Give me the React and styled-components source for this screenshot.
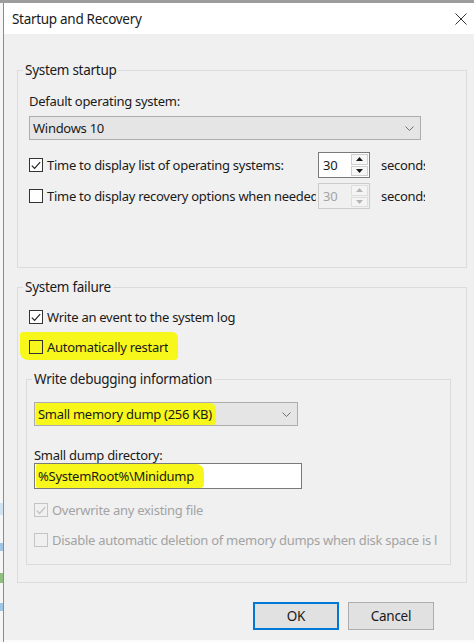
import React from "react";
import styled, { createGlobalStyle } from "styled-components";

const GlobalStyle = createGlobalStyle`
  html, body {
    margin: 0;
    padding: 0;
  }
  body {
    background: #f0f0f0;
    font-family: "Noto Sans", "Open Sans", sans-serif;
    color: #1a1a1a;
  }
`;

const Screen = styled.div`
  display: flex;
  width: 474px;
  height: 642px;
  box-sizing: border-box;
  overflow: hidden;
  border-top: 3px solid #9d9d9d;
`;

const BehindWindow = styled.div`
  width: 3px;
  flex-shrink: 0;
  background: linear-gradient(
    to bottom,
    #f6f6f6 0,
    #f6f6f6 500px,
    #cfe3f2 500px,
    #cfe3f2 512px,
    #f6f6f6 512px,
    #f6f6f6 540px,
    #9fc6e6 540px,
    #9fc6e6 548px,
    #f6f6f6 548px,
    #f6f6f6 570px,
    #8fbf7f 570px,
    #8fbf7f 580px,
    #f6f6f6 580px,
    #f6f6f6 600px,
    #9fc6e6 600px,
    #9fc6e6 608px,
    #f6f6f6 608px
  );
`;

const Dialog = styled.div`
  flex: 1;
  display: flex;
  flex-direction: column;
  border-left: 1px solid #8c8c8c;
  background: #f0f0f0;
  font-size: 13px;
  letter-spacing: -0.28px;
`;

const TitleBar = styled.div`
  height: 31px;
  flex-shrink: 0;
  display: flex;
  align-items: center;
  justify-content: space-between;
  padding: 0 6px 0 8px;
  background: #ffffff;
  font-size: 13.5px;
  letter-spacing: -0.3px;
  color: #1a1a1a;
`;

const CloseButton = styled.span`
  display: flex;
  align-items: center;
  justify-content: center;
  width: 14px;
  height: 14px;
`;

const Body = styled.div`
  flex: 1;
  display: flex;
  flex-direction: column;
  padding: 27px 7px 0 13px;
  border-bottom: 2px solid #fbfbfb;
`;

const GroupBox = styled.fieldset`
  margin: ${(p) => p.$margin || "0"};
  padding: 0 ${(p) => p.$padRight}px ${(p) => p.$padBottom}px ${(p) => p.$padLeft}px;
  border: 1px solid #dcdcdc;
  min-width: 0;
  display: flex;
  flex-direction: column;
  align-items: flex-start;
  align-self: ${(p) => (p.$stretch ? "stretch" : "auto")};
`;

const GroupTitle = styled.legend`
  padding: 0 2px;
  margin-left: ${(p) => p.$shift}px;
  line-height: 18px;
  font-size: 13.5px;
`;

const Label = styled.div`
  margin-top: ${(p) => p.$top}px;
  line-height: ${(p) => p.$lh || 18}px;
  white-space: nowrap;
`;

const Select = styled.div`
  margin-top: ${(p) => p.$top}px;
  width: ${(p) => p.$width}px;
  height: 24px;
  box-sizing: border-box;
  display: flex;
  align-items: center;
  justify-content: space-between;
  padding: 0 6px 0 3px;
  background: #e5e5e5;
  border: 1px solid #adadad;
  white-space: nowrap;
`;

const TextField = styled.div`
  width: ${(p) => p.$width}px;
  height: 26px;
  box-sizing: border-box;
  display: flex;
  align-items: center;
  padding-left: 1px;
  background: #ffffff;
  border: 1px solid #7a7a7a;
`;

const Marker = styled.span`
  display: inline-flex;
  align-items: center;
  background: #f7f71c;
  border-radius: ${(p) => p.$radius || "3px 6px 4px 8px"};
  padding: ${(p) => p.$pad};
  margin: ${(p) => p.$margin};
`;

const SpinRow = styled.div`
  margin-top: ${(p) => p.$top}px;
  height: 26px;
  display: flex;
  align-items: center;
`;

const CheckRow = styled.div`
  margin-top: ${(p) => p.$top || 0}px;
  height: 18px;
  display: flex;
  align-items: center;
  width: ${(p) => (p.$width ? `${p.$width}px` : "auto")};
  overflow: hidden;
  white-space: nowrap;
  flex-shrink: 0;
  color: ${(p) => (p.$disabled ? "#a3a3a3" : "#1a1a1a")};
`;

const Box = styled.span`
  width: 14px;
  height: 14px;
  box-sizing: border-box;
  flex-shrink: 0;
  margin-right: 4px;
  display: flex;
  align-items: center;
  justify-content: center;
  border: 1px solid ${(p) => (p.$disabled ? "#c4c4c4" : "#333333")};
  background: ${(p) => (p.$clear ? "transparent" : p.$disabled ? "#f0f0f0" : "#ffffff")};
`;

const Spin = styled.div`
  margin-left: 2px;
  width: 52px;
  height: 26px;
  box-sizing: border-box;
  display: flex;
  flex-shrink: 0;
  border: 1px solid ${(p) => (p.$disabled ? "#cccccc" : "#7a7a7a")};
  background: ${(p) => (p.$disabled ? "#f0f0f0" : "#ffffff")};
  color: ${(p) => (p.$disabled ? "#a3a3a3" : "#1a1a1a")};
`;

const SpinValue = styled.span`
  flex: 1;
  padding: 3px 0 0 4px;
  line-height: 18px;
`;

const SpinButtons = styled.div`
  width: 17px;
  display: flex;
  flex-direction: column;
  gap: 1px;
  padding: 1px 1px 1px 0;
`;

const SpinButton = styled.span`
  flex: 1;
  display: flex;
  align-items: center;
  justify-content: center;
  background: ${(p) => (p.$disabled ? "#f4f4f4" : "#f7f7f7")};
  border: 1px solid ${(p) => (p.$disabled ? "#dedede" : "#cfcfcf")};
`;

const Seconds = styled.span`
  margin-left: 11px;
  width: 44px;
  overflow: hidden;
  white-space: nowrap;
`;

const ButtonRow = styled.div`
  margin-top: 19px;
  display: flex;
  justify-content: flex-end;
  gap: 9px;
  padding-right: 33px;
`;

const Button = styled.div`
  width: 86px;
  height: 28px;
  box-sizing: border-box;
  display: flex;
  align-items: center;
  justify-content: center;
  background: #e1e1e1;
  border: ${(p) => (p.$primary ? "2px solid #0078d7" : "1px solid #adadad")};
  font-size: 13.5px;
`;

const Check = ({ color = "#222" }) => (
  <svg width="10" height="9" viewBox="0 0 10 9">
    <path d="M0.8 4.6 L3.6 7.4 L9.2 1.2" fill="none" stroke={color} strokeWidth="1.2" />
  </svg>
);

const Chevron = () => (
  <svg width="9" height="5" viewBox="0 0 9 5">
    <path d="M0.5 0.5 L4.5 4.5 L8.5 0.5" fill="none" stroke="#707070" strokeWidth="1" />
  </svg>
);

const Arrow = ({ up, color }) => (
  <svg width="7" height="4" viewBox="0 0 7 4">
    <path d={up ? "M0 4 L3.5 0 L7 4 Z" : "M0 0 L3.5 4 L7 0 Z"} fill={color} />
  </svg>
);

const Close = () => (
  <svg width="12" height="12" viewBox="0 0 12 12">
    <path d="M0.5 0.5 L11.5 11.5 M11.5 0.5 L0.5 11.5" stroke="#333" strokeWidth="1" />
  </svg>
);

const CheckBox = ({ checked, disabled, clear, label, top, width }) => (
  <CheckRow $disabled={disabled} $top={top} $width={width}>
    <Box $disabled={disabled} $clear={clear}>
      {checked && <Check color={disabled ? "#bdbdbd" : "#222"} />}
    </Box>
    {label}
  </CheckRow>
);

const SpinBox = ({ value, disabled }) => {
  const arrow = disabled ? "#b5b5b5" : "#1a1a1a";
  return (
    <Spin $disabled={disabled}>
      <SpinValue>{value}</SpinValue>
      <SpinButtons>
        <SpinButton $disabled={disabled}>
          <Arrow up color={arrow} />
        </SpinButton>
        <SpinButton $disabled={disabled}>
          <Arrow color={arrow} />
        </SpinButton>
      </SpinButtons>
    </Spin>
  );
};

export default function App() {
  return (
    <Screen>
      <GlobalStyle />
      <BehindWindow />
      <Dialog>
        <TitleBar>
          Startup and Recovery
          <CloseButton>
            <Close />
          </CloseButton>
        </TitleBar>
        <Body>
          <GroupBox $padLeft={11} $padRight={12} $padBottom={58}>
            <GroupTitle $shift={-6}>System startup</GroupTitle>
            <Label $top={13}>Default operating system:</Label>
            <Select $top={6} $width={392}>
              Windows 10
              <Chevron />
            </Select>
            <SpinRow $top={12}>
              <CheckBox checked width={287} label="Time to display list of operating systems:" />
              <SpinBox value="30" />
              <Seconds>seconds</Seconds>
            </SpinRow>
            <SpinRow $top={5}>
              <CheckBox width={287} label="Time to display recovery options when needed:" />
              <SpinBox value="30" disabled />
              <Seconds>seconds</Seconds>
            </SpinRow>
          </GroupBox>

          <GroupBox $margin="10px 0 0 0" $padLeft={11} $padRight={12} $padBottom={17}>
            <GroupTitle $shift={-6}>System failure</GroupTitle>
            <CheckBox top={12} checked label="Write an event to the system log" />
            <Marker $pad="6px 10px 4px 9px" $margin="6px 0 -4px -9px">
              <CheckBox clear label="Automatically restart" />
            </Marker>
            <GroupBox $stretch $margin="14px 3px 0 -3px" $padLeft={7} $padRight={10} $padBottom={15}>
              <GroupTitle $shift={-2}>Write debugging information</GroupTitle>
              <Select $top={14} $width={264}>
                <Marker $pad="2px 4px 2px 2px" $margin="0 0 0 -2px" $radius="2px 6px 3px 2px">
                  Small memory dump (256 KB)
                </Marker>
                <Chevron />
              </Select>
              <Label $top={21} $lh={16}>Small dump directory:</Label>
              <TextField $width={268}>
                <Marker $pad="3px 10px 3px 2px" $margin="0" $radius="2px 8px 4px 2px">
                  %SystemRoot%\Minidump
                </Marker>
              </TextField>
              <CheckBox top={12} checked disabled label="Overwrite any existing file" />
              <CheckBox
                top={12}
                width={403}
                disabled
                label="Disable automatic deletion of memory dumps when disk space is low"
              />
            </GroupBox>
          </GroupBox>

          <ButtonRow>
            <Button $primary>OK</Button>
            <Button>Cancel</Button>
          </ButtonRow>
        </Body>
      </Dialog>
    </Screen>
  );
}
